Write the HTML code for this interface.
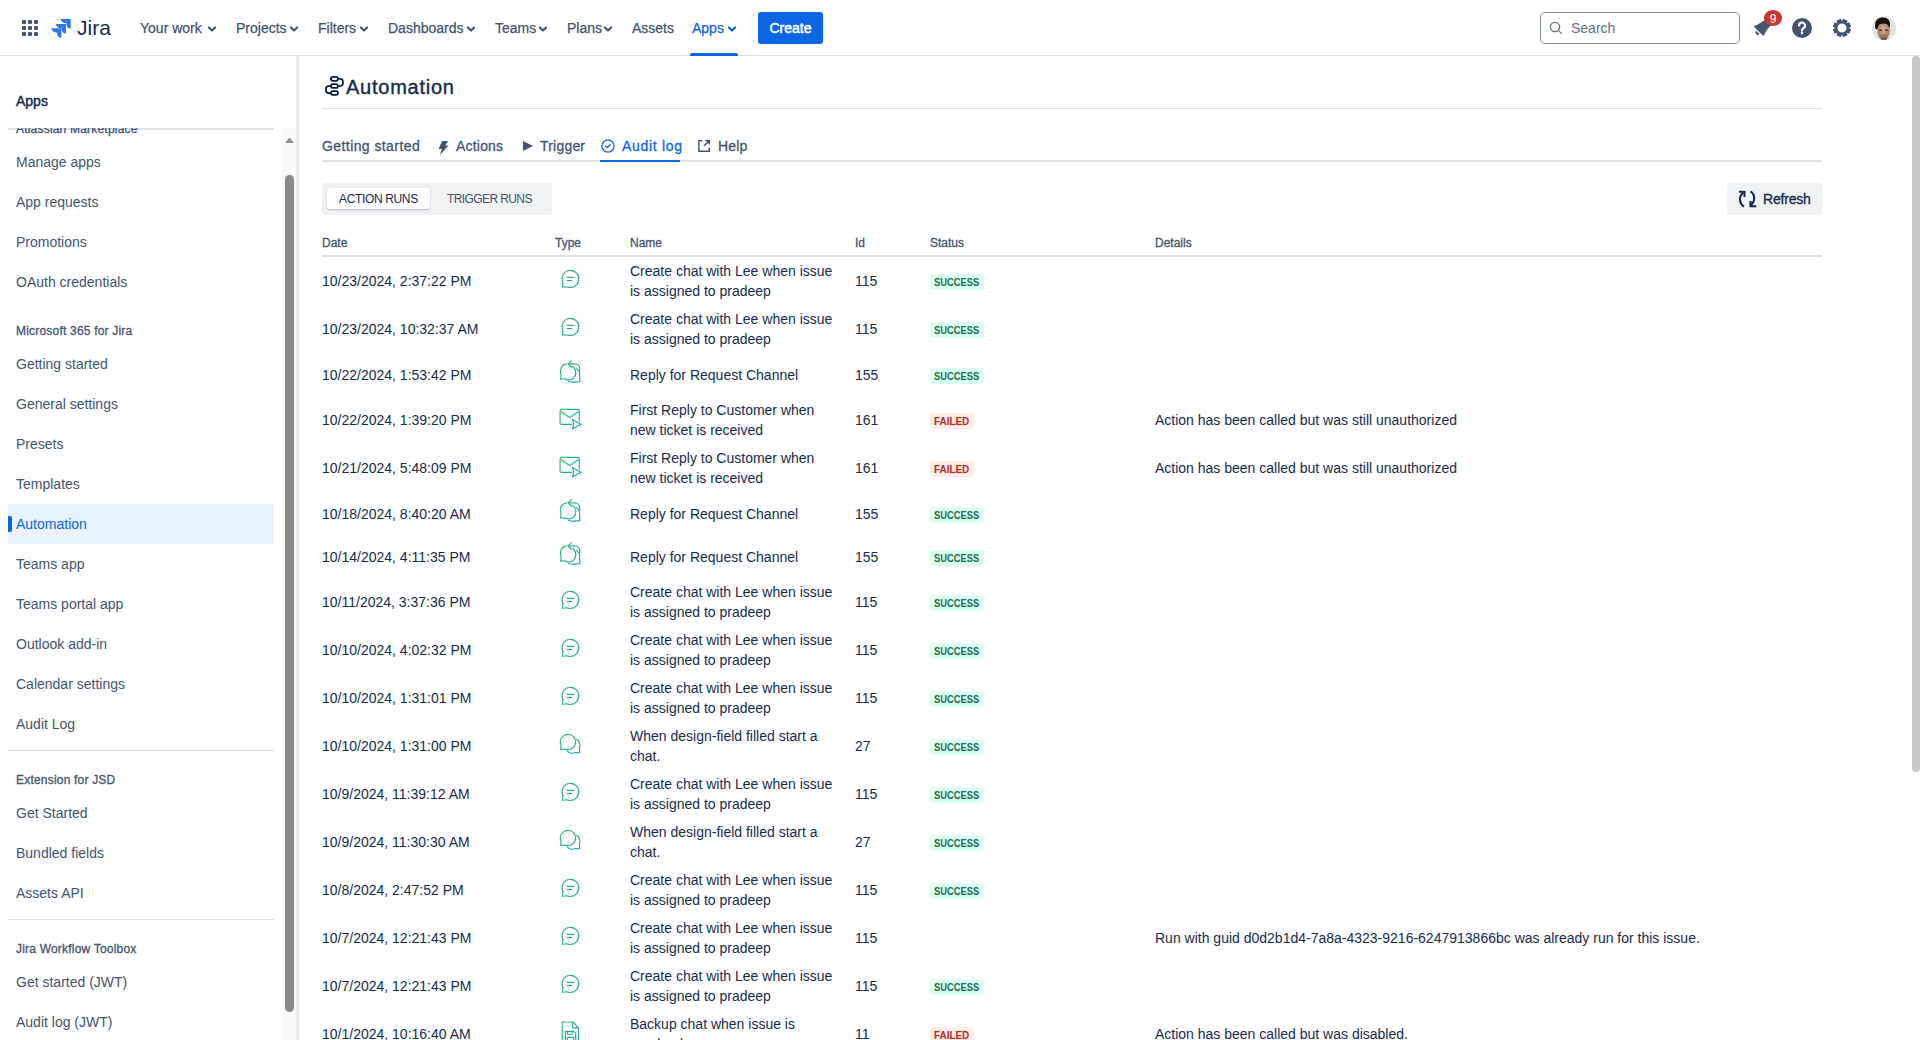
<!DOCTYPE html>
<html><head><meta charset="utf-8"><style>
*{box-sizing:border-box;margin:0;padding:0}
html,body{width:1920px;height:1040px;overflow:hidden;background:#fff;font-family:"Liberation Sans",sans-serif;color:#172B4D}
.abs{position:absolute}
#hdr{position:absolute;left:0;top:0;width:1920px;height:56px;background:#fff;border-bottom:1px solid #DFE1E6}
.nav{position:absolute;top:18px;line-height:20px;font-size:14px;color:#44546F;white-space:nowrap;-webkit-text-stroke:0.25px currentColor}
.chev{position:absolute;top:23.6px}
#side{position:absolute;left:0;top:56px;width:296px;height:984px;background:#fff}
#divider{position:absolute;left:296px;top:56px;width:3px;height:984px;background:#EBECF0}
#sscroll{position:absolute;left:0;top:128px;width:282px;height:912px;overflow:hidden}
.si{position:absolute;left:16px;line-height:20px;font-size:14px;color:#44546F;white-space:nowrap}
.si.sel{color:#0C66E4}
.sh{position:absolute;left:16px;line-height:16px;font-size:12px;color:#44546F;white-space:nowrap;-webkit-text-stroke:0.3px #44546F;letter-spacing:0.2px}
.selbg{position:absolute;left:8px;width:266px;height:40px;background:#E9F2FF;border-radius:3px}
.selbar{position:absolute;left:8px;width:4px;height:16px;background:#0C66E4;border-radius:0 2px 2px 0}
.sep{position:absolute;left:8px;width:266px;height:1px;background:#DFE1E6}
.t{position:absolute;line-height:20px;font-size:14px;color:#172B4D;white-space:nowrap}
.loz{position:absolute;height:16px;line-height:16px;padding:0 0 0 4px;font-size:11px;font-weight:700;border-radius:3px;white-space:nowrap}.loz span{display:inline-block;transform-origin:0 50%}
.loz.ok{background:#DCFFF1;color:#216E4E}
.loz.bad{background:#FFECEB;color:#AE2E24}
.ic{position:absolute}
.th{position:absolute;top:235px;line-height:16px;font-size:12px;color:#44546F;white-space:nowrap;-webkit-text-stroke:0.3px #44546F}
.tab{position:absolute;top:136px;line-height:20px;font-size:14px;color:#44546F;white-space:nowrap;-webkit-text-stroke:0.3px currentColor;letter-spacing:0.2px}
</style></head><body>
<div id="hdr">
 <svg class="abs" style="left:22px;top:20px" width="16" height="16" viewBox="0 0 16 16" fill="#44546F">
  <rect x="0" y="0" width="4" height="4" rx="1"/><rect x="6" y="0" width="4" height="4" rx="1"/><rect x="12" y="0" width="4" height="4" rx="1"/>
  <rect x="0" y="6" width="4" height="4" rx="1"/><rect x="6" y="6" width="4" height="4" rx="1"/><rect x="12" y="6" width="4" height="4" rx="1"/>
  <rect x="0" y="12" width="4" height="4" rx="1"/><rect x="6" y="12" width="4" height="4" rx="1"/><rect x="12" y="12" width="4" height="4" rx="1"/>
 </svg>
 <svg class="abs" style="left:50px;top:17px" width="24" height="24" viewBox="50 17 24 24" fill="#2A78E4"><path d="M60.80 19 H70.7 V28.60 C68.10 28.40 66.30 26.60 66.30 23.20 C62.90 23.20 61.00 21.60 60.80 19Z"/><path d="M56.00 24 H65.9 V33.60 C63.30 33.40 61.50 31.60 61.50 28.20 C58.10 28.20 56.20 26.60 56.00 24Z"/><path d="M51.50 28.2 H61.4 V37.80 C58.80 37.60 57.00 35.80 57.00 32.40 C53.60 32.40 51.70 30.80 51.50 28.2Z"/></svg>
 <div class="abs" style="left:77px;top:15px;line-height:26px;font-size:21px;color:#172B4D">Jira</div>
 <div class="nav" style="left:140px">Your work</div><svg class="chev" style="left:207px" width="10" height="10" viewBox="0 0 10 10"><path d="M1.9 3.5 5 6.5 8.1 3.5" fill="none" stroke="#44546F" stroke-width="2.2" stroke-linecap="round" stroke-linejoin="round"/></svg>
 <div class="nav" style="left:236px">Projects</div><svg class="chev" style="left:289px" width="10" height="10" viewBox="0 0 10 10"><path d="M1.9 3.5 5 6.5 8.1 3.5" fill="none" stroke="#44546F" stroke-width="2.2" stroke-linecap="round" stroke-linejoin="round"/></svg>
 <div class="nav" style="left:318px">Filters</div><svg class="chev" style="left:359px" width="10" height="10" viewBox="0 0 10 10"><path d="M1.9 3.5 5 6.5 8.1 3.5" fill="none" stroke="#44546F" stroke-width="2.2" stroke-linecap="round" stroke-linejoin="round"/></svg>
 <div class="nav" style="left:388px">Dashboards</div><svg class="chev" style="left:466px" width="10" height="10" viewBox="0 0 10 10"><path d="M1.9 3.5 5 6.5 8.1 3.5" fill="none" stroke="#44546F" stroke-width="2.2" stroke-linecap="round" stroke-linejoin="round"/></svg>
 <div class="nav" style="left:495px">Teams</div><svg class="chev" style="left:538px" width="10" height="10" viewBox="0 0 10 10"><path d="M1.9 3.5 5 6.5 8.1 3.5" fill="none" stroke="#44546F" stroke-width="2.2" stroke-linecap="round" stroke-linejoin="round"/></svg>
 <div class="nav" style="left:567px">Plans</div><svg class="chev" style="left:603px" width="10" height="10" viewBox="0 0 10 10"><path d="M1.9 3.5 5 6.5 8.1 3.5" fill="none" stroke="#44546F" stroke-width="2.2" stroke-linecap="round" stroke-linejoin="round"/></svg>
 <div class="nav" style="left:632px">Assets</div>
 <div class="nav" style="left:692px;color:#0C66E4">Apps</div><svg class="chev" style="left:727px" width="10" height="10" viewBox="0 0 10 10"><path d="M1.9 3.5 5 6.5 8.1 3.5" fill="none" stroke="#0C66E4" stroke-width="2.2" stroke-linecap="round" stroke-linejoin="round"/></svg>
 <div class="abs" style="left:690px;top:53px;width:48px;height:3px;background:#0C66E4;border-radius:2px 2px 0 0"></div>
 <div class="abs" style="left:758px;top:12px;width:65px;height:32px;background:#0C66E4;border-radius:3px;color:#fff;font-size:14px;-webkit-text-stroke:0.5px #fff;line-height:32px;text-align:center">Create</div>
 <div class="abs" style="left:1540px;top:12px;width:200px;height:32px;border:1px solid #8590A2;border-radius:5px"></div>
 <svg class="abs" style="left:1549px;top:21px" width="14" height="14" viewBox="0 0 14 14"><circle cx="6" cy="6" r="4.6" fill="none" stroke="#626F86" stroke-width="1.3"/><path d="M9.4 9.4l3 3" stroke="#626F86" stroke-width="1.3" stroke-linecap="round"/></svg>
 <div class="abs" style="left:1571px;top:18px;line-height:20px;font-size:14px;color:#626F86">Search</div>
 <svg class="abs" style="left:1750px;top:6px" width="40" height="36" viewBox="1750 6 40 36"><path d="M1754 26.4 L1763.4 35.8 C1765 31.8 1767.3 28.6 1771 25.2 L1765.6 19.6 C1762.4 22.4 1758.4 24.8 1754 26.4Z" fill="#44546F" stroke="#44546F" stroke-width="0.6" stroke-linejoin="round"/><path d="M1756.2 30.8 L1759.6 34.2 C1758.6 35.2 1757 35.1 1756.1 34.2 C1755.2 33.3 1755.2 31.8 1756.2 30.8Z" fill="#44546F"/><ellipse cx="1773" cy="18" rx="9" ry="8.1" fill="#C9372C"/><text x="1773" y="23" text-anchor="middle" style="font-family:'Liberation Sans';font-size:12px" fill="#fff">9</text></svg>
 <svg class="abs" style="left:1791px;top:17px" width="22" height="22" viewBox="0 0 22 22"><circle cx="11" cy="11" r="10" fill="#44546F"/><path d="M8 8.6a3 3 0 1 1 4.4 2.6c-.9.5-1.4 1-1.4 1.9v.6" fill="none" stroke="#fff" stroke-width="2.1" stroke-linecap="round"/><rect x="9.9" y="15" width="2.2" height="2.2" fill="#fff"/></svg>
 <svg class="abs" style="left:1830px;top:15.7px" width="24" height="24" viewBox="0 0 24 24"><path fill="#44546F" stroke="#44546F" stroke-width="1.1" stroke-linejoin="round" fill-rule="evenodd" d="M12.57 5.52 L13.49 3.53 L16.93 4.96 L16.18 7.02 L16.98 7.82 L19.04 7.07 L20.47 10.51 L18.48 11.43 L18.48 12.57 L20.47 13.49 L19.04 16.93 L16.98 16.18 L16.18 16.98 L16.93 19.04 L13.49 20.47 L12.57 18.48 L11.43 18.48 L10.51 20.47 L7.07 19.04 L7.82 16.98 L7.02 16.18 L4.96 16.93 L3.53 13.49 L5.52 12.57 L5.52 11.43 L3.53 10.51 L4.96 7.07 L7.02 7.82 L7.82 7.02 L7.07 4.96 L10.51 3.53 L11.43 5.52Z M17.10 12 A5.1 5.1 0 1 0 6.90 12 A5.1 5.1 0 1 0 17.10 12Z"/></svg>
 <svg class="abs" style="left:1872px;top:16px" width="24" height="24" viewBox="0 0 24 24"><defs><clipPath id="avc"><circle cx="12" cy="12" r="12"/></clipPath><radialGradient id="skin" cx="50%" cy="40%" r="65%"><stop offset="0" stop-color="#DDB39A"/><stop offset="1" stop-color="#9A6450"/></radialGradient></defs><g clip-path="url(#avc)"><rect width="24" height="24" fill="#E4E3DE"/><path d="M2 27 C3 21 7 20.5 11.5 20.5 C16 20.5 20 21 21 27Z" fill="#B5DCE6"/><ellipse cx="11.6" cy="14.8" rx="6.2" ry="8.6" fill="url(#skin)"/><rect x="8.8" y="21.5" width="6" height="4" fill="#7E4E3C"/><path d="M3.4 12.6 C2.2 6.2 4.6 1.8 10.2 1.6 C15.6 1.4 18.6 4.4 18 9.4 L17.3 12.2 C16.6 9 14.6 7.3 11 7.6 C7.8 7.9 6.2 8.8 5.3 13.8Z" fill="#16120F"/><path d="M7.2 14.2h3M12.8 14.2h3" stroke="#3a2620" stroke-width="1.3"/><path d="M9.5 19.6h4.5" stroke="#8a5a48" stroke-width="0.9"/></g></svg>
</div>

<div id="side">
 <div class="abs" style="left:16px;top:35px;line-height:20px;font-size:14px;color:#172B4D;-webkit-text-stroke:0.45px #172B4D">Apps</div>
</div>
<div class="abs" style="left:8px;top:128px;width:266px;height:2px;background:#DFE1E6"></div>
<div id="sscroll"><div class="sh" style="top:-7.16px">Atlassian Marketplace</div><div class="si" style="top:24px">Manage apps</div><div class="si" style="top:64px">App requests</div><div class="si" style="top:104px">Promotions</div><div class="si" style="top:144px">OAuth credentials</div><div class="sh" style="top:195.24px">Microsoft 365 for Jira</div><div class="si" style="top:226px">Getting started</div><div class="si" style="top:266px">General settings</div><div class="si" style="top:306px">Presets</div><div class="si" style="top:346px">Templates</div><div class="selbg" style="top:376px"></div><div class="selbar" style="top:388px"></div><div class="si sel" style="top:386px">Automation</div><div class="si" style="top:426px">Teams app</div><div class="si" style="top:466px">Teams portal app</div><div class="si" style="top:506px">Outlook add-in</div><div class="si" style="top:546px">Calendar settings</div><div class="si" style="top:586px">Audit Log</div><div class="sep" style="top:622px"></div><div class="sh" style="top:643.64px">Extension for JSD</div><div class="si" style="top:675px">Get Started</div><div class="si" style="top:715px">Bundled fields</div><div class="si" style="top:755px">Assets API</div><div class="sep" style="top:791px"></div><div class="sh" style="top:812.64px">Jira Workflow Toolbox</div><div class="si" style="top:844px">Get started (JWT)</div><div class="si" style="top:884px">Audit log (JWT)</div></div>
<div class="abs" style="left:282px;top:128px;width:14px;height:912px;background:#FAFAFA"></div>
<svg class="abs" style="left:284px;top:137px" width="11" height="7" viewBox="0 0 11 7"><path d="M5.5 0.5 10 6H1z" fill="#8F8F8F"/></svg>
<div class="abs" style="left:285px;top:175px;width:9px;height:837px;background:#8B8B8B;border-radius:5px"></div>
<div id="divider"></div>

<div class="abs" style="left:1912px;top:56px;width:8px;height:716px;background:#C8C8C8;border-radius:4px"></div>

<!-- page title -->
<svg class="abs" style="left:320px;top:72px" width="30" height="28" viewBox="320 72 30 28"><g fill="none" stroke="#091E42" stroke-width="1.75"><rect x="330.95" y="76.85" width="7.05" height="4" rx="2"/><rect x="330.95" y="84.05" width="7.05" height="3.9" rx="1.95"/><rect x="330.95" y="91.15" width="7.05" height="3.8" rx="1.9"/><path d="M338.9 78.85H340.3C342 78.85 342.95 80 342.95 81.7V83.1C342.95 84.9 342 86 340.3 86H338.9"/><path d="M330.9 86H328.7C327 86 325.95 87.1 325.95 88.8V90.2C325.95 91.9 327 93.05 328.7 93.05H330.9"/></g></svg>
<div class="abs" style="left:346px;top:73px;line-height:28px;font-size:20px;color:#172B4D;letter-spacing:0.75px;-webkit-text-stroke:0.4px #172B4D">Automation</div>
<div class="abs" style="left:322px;top:108px;width:1500px;height:1px;background:#DFE1E6"></div>

<!-- tabs -->
<div class="tab" style="left:322px;letter-spacing:0.42px">Getting started</div>
<svg class="abs" style="left:438px;top:141px" width="11" height="14" viewBox="0 0 11 14"><path d="M4.2 0h6L7.3 4.6h3.2L2 14l1.9-6.1H.6z" fill="#44546F"/></svg>
<div class="tab" style="left:456px">Actions</div>
<svg class="abs" style="left:523px;top:141px" width="10" height="10" viewBox="0 0 10 10"><path d="M0 0l10 5-10 5z" fill="#44546F"/></svg>
<div class="tab" style="left:540px">Trigger</div>
<svg class="abs" style="left:600px;top:138px" width="16" height="16" viewBox="0 0 16 16"><circle cx="8" cy="8" r="6.1" fill="none" stroke="#0C66E4" stroke-width="1.3"/><path d="M5.6 8.2 7.3 9.6l2.9-2.9" fill="none" stroke="#0C66E4" stroke-width="1.35" stroke-linecap="round" stroke-linejoin="round"/></svg>
<div class="tab" style="left:622px;color:#0C66E4;letter-spacing:0.7px">Audit log</div>
<svg class="abs" style="left:697px;top:139px" width="14" height="14" viewBox="0 0 14 14"><path d="M5.3 1.8H1.9V12.2H12.3V8.7M8.4 1.7H12.3V5.6M12.1 1.9 6.9 7.1" fill="none" stroke="#44546F" stroke-width="1.45"/></svg>
<div class="tab" style="left:718px">Help</div>
<div class="abs" style="left:322px;top:160px;width:1500px;height:2px;background:#DFE1E6"></div>
<div class="abs" style="left:600px;top:160px;width:80px;height:2px;background:#0C66E4"></div>

<!-- segmented -->
<div class="abs" style="left:322px;top:183px;width:230px;height:32px;background:#F1F2F4;border-radius:3px"></div>
<div class="abs" style="left:327px;top:188px;width:103px;height:21px;background:#fff;border-radius:3px;box-shadow:0 1px 2px rgba(9,30,66,.25)"></div>
<div class="abs" style="left:339px;top:191px;line-height:16px;font-size:12px;color:#172B4D;letter-spacing:-0.35px">ACTION RUNS</div>
<div class="abs" style="left:447px;top:191px;line-height:16px;font-size:12px;color:#44546F;letter-spacing:-0.6px">TRIGGER RUNS</div>

<!-- refresh -->
<div class="abs" style="left:1727px;top:183px;width:95px;height:32px;background:#F1F2F4;border-radius:3px"></div>
<svg class="abs" style="left:1736px;top:188px" width="22" height="22" viewBox="0 0 22 22"><g fill="none" stroke="#172B4D" stroke-width="2.1" stroke-linejoin="miter" stroke-linecap="butt"><path d="M7.4 4.6C3 7.6 2.4 14.4 8 18.6"/><path d="M2.9 3.7H8.5V9"/><path d="M14.4 3.4C19.2 6.4 19.8 13.4 14.2 17.6"/><path d="M20.2 18.3H14.5V13"/></g></svg><div class="abs" style="left:1763px;top:189px;line-height:20px;font-size:14px;color:#172B4D;-webkit-text-stroke:0.35px #172B4D;letter-spacing:-0.2px">Refresh</div>

<!-- table header -->
<div class="th" style="left:322px">Date</div>
<div class="th" style="left:555px">Type</div>
<div class="th" style="left:630px">Name</div>
<div class="th" style="left:855px">Id</div>
<div class="th" style="left:930px">Status</div>
<div class="th" style="left:1155px">Details</div>
<div class="abs" style="left:322px;top:255px;width:1500px;height:2px;background:#DFE1E6"></div>
<div class="t" style="left:322px;top:271.0px">10/23/2024, 2:37:22 PM</div><svg class="ic" style="left:558px;top:266.0px" width="26" height="30" viewBox="0 0 26 30"><defs><linearGradient id="g0" gradientUnits="userSpaceOnUse" x1="2" y1="2" x2="22" y2="22"><stop offset="0" stop-color="#3BB97F"/><stop offset="1" stop-color="#18A5AE"/></linearGradient></defs><path d="M12.3 4.3a8.55 8.55 0 1 1 -3.4 16.4 L4.4 21.2 5 16.6 A8.55 8.55 0 0 1 12.3 4.3z" fill="none" stroke="url(#g0)" stroke-width="1.15" stroke-linecap="round" stroke-linejoin="round"/><path d="M9.1 11.4h6.8M9.1 14.5h4.6" fill="none" stroke="url(#g0)" stroke-width="1.15" stroke-linecap="round" stroke-linejoin="round" stroke-width="1.3"/></svg><div class="t" style="left:630px;top:261.0px">Create chat with Lee when issue<br>is assigned to pradeep</div><div class="t" style="left:855px;top:271.0px">115</div><div class="loz ok" style="left:930px;top:274.0px;width:54px"><span style="transform:scaleX(0.85)">SUCCESS</span></div><div class="t" style="left:322px;top:319.0px">10/23/2024, 10:32:37 AM</div><svg class="ic" style="left:558px;top:314.0px" width="26" height="30" viewBox="0 0 26 30"><defs><linearGradient id="g1" gradientUnits="userSpaceOnUse" x1="2" y1="2" x2="22" y2="22"><stop offset="0" stop-color="#3BB97F"/><stop offset="1" stop-color="#18A5AE"/></linearGradient></defs><path d="M12.3 4.3a8.55 8.55 0 1 1 -3.4 16.4 L4.4 21.2 5 16.6 A8.55 8.55 0 0 1 12.3 4.3z" fill="none" stroke="url(#g1)" stroke-width="1.15" stroke-linecap="round" stroke-linejoin="round"/><path d="M9.1 11.4h6.8M9.1 14.5h4.6" fill="none" stroke="url(#g1)" stroke-width="1.15" stroke-linecap="round" stroke-linejoin="round" stroke-width="1.3"/></svg><div class="t" style="left:630px;top:309.0px">Create chat with Lee when issue<br>is assigned to pradeep</div><div class="t" style="left:855px;top:319.0px">115</div><div class="loz ok" style="left:930px;top:322.0px;width:54px"><span style="transform:scaleX(0.85)">SUCCESS</span></div><div class="t" style="left:322px;top:364.5px">10/22/2024, 1:53:42 PM</div><svg class="ic" style="left:558px;top:359.5px" width="26" height="30" viewBox="0 0 26 30"><defs><linearGradient id="g2" gradientUnits="userSpaceOnUse" x1="2" y1="2" x2="22" y2="22"><stop offset="0" stop-color="#3BB97F"/><stop offset="1" stop-color="#18A5AE"/></linearGradient></defs><path d="M8.4 3.9C4.8 4.7 2.3 7.8 2.4 11.6c0 1.4.3 2.5.8 3.5L2.6 19.1l3.9-.3c1.3.8 2.9 1.2 4.5 1.2 3.9 0 6.8-3.1 6.8-7.2 0-2.8-1.2-5-2.9-6.3" fill="none" stroke="url(#g2)" stroke-width="1.15" stroke-linecap="round" stroke-linejoin="round"/><path d="M13.5 0.6 10 3.9l3.5 3.6M10.2 3.9h6.3c3.2 0 5.3 2.2 5.3 5 0 1.4-.3 2.3-.3 3.1l.4 9.8-4 .1c-1.5.5-5.2.4-7.4-.6M18.6 8.7l2.6 2.8" fill="none" stroke="url(#g2)" stroke-width="1.15" stroke-linecap="round" stroke-linejoin="round"/></svg><div class="t" style="left:630px;top:364.5px">Reply for Request Channel</div><div class="t" style="left:855px;top:364.5px">155</div><div class="loz ok" style="left:930px;top:367.5px;width:54px"><span style="transform:scaleX(0.85)">SUCCESS</span></div><div class="t" style="left:322px;top:410.0px">10/22/2024, 1:39:20 PM</div><svg class="ic" style="left:558px;top:405.0px" width="26" height="30" viewBox="0 0 26 30"><defs><linearGradient id="g3" gradientUnits="userSpaceOnUse" x1="2" y1="2" x2="22" y2="22"><stop offset="0" stop-color="#3BB97F"/><stop offset="1" stop-color="#18A5AE"/></linearGradient></defs><path d="M13.6 19.4H3.6a1.5 1.5 0 0 1-1.5-1.5V5.9a1.5 1.5 0 0 1 1.5-1.5h16.1a1.5 1.5 0 0 1 1.5 1.5v10.2" fill="none" stroke="url(#g3)" stroke-width="1.15" stroke-linecap="round" stroke-linejoin="round"/><path d="M2.6 6.6 11.6 12.4 20.8 6.6" fill="none" stroke="url(#g3)" stroke-width="1.15" stroke-linecap="round" stroke-linejoin="round"/><path d="M14.6 14.6 23 19.3l-8.4 4.4 1.3-4.4z" fill="none" stroke="url(#g3)" stroke-width="1.15" stroke-linecap="round" stroke-linejoin="round"/></svg><div class="t" style="left:630px;top:400.0px">First Reply to Customer when<br>new ticket is received</div><div class="t" style="left:855px;top:410.0px">161</div><div class="loz bad" style="left:930px;top:413.0px;width:44px"><span style="transform:scaleX(0.9)">FAILED</span></div><div class="t" style="left:1155px;top:410.0px">Action has been called but was still unauthorized</div><div class="t" style="left:322px;top:458.0px">10/21/2024, 5:48:09 PM</div><svg class="ic" style="left:558px;top:453.0px" width="26" height="30" viewBox="0 0 26 30"><defs><linearGradient id="g4" gradientUnits="userSpaceOnUse" x1="2" y1="2" x2="22" y2="22"><stop offset="0" stop-color="#3BB97F"/><stop offset="1" stop-color="#18A5AE"/></linearGradient></defs><path d="M13.6 19.4H3.6a1.5 1.5 0 0 1-1.5-1.5V5.9a1.5 1.5 0 0 1 1.5-1.5h16.1a1.5 1.5 0 0 1 1.5 1.5v10.2" fill="none" stroke="url(#g4)" stroke-width="1.15" stroke-linecap="round" stroke-linejoin="round"/><path d="M2.6 6.6 11.6 12.4 20.8 6.6" fill="none" stroke="url(#g4)" stroke-width="1.15" stroke-linecap="round" stroke-linejoin="round"/><path d="M14.6 14.6 23 19.3l-8.4 4.4 1.3-4.4z" fill="none" stroke="url(#g4)" stroke-width="1.15" stroke-linecap="round" stroke-linejoin="round"/></svg><div class="t" style="left:630px;top:448.0px">First Reply to Customer when<br>new ticket is received</div><div class="t" style="left:855px;top:458.0px">161</div><div class="loz bad" style="left:930px;top:461.0px;width:44px"><span style="transform:scaleX(0.9)">FAILED</span></div><div class="t" style="left:1155px;top:458.0px">Action has been called but was still unauthorized</div><div class="t" style="left:322px;top:503.5px">10/18/2024, 8:40:20 AM</div><svg class="ic" style="left:558px;top:498.5px" width="26" height="30" viewBox="0 0 26 30"><defs><linearGradient id="g5" gradientUnits="userSpaceOnUse" x1="2" y1="2" x2="22" y2="22"><stop offset="0" stop-color="#3BB97F"/><stop offset="1" stop-color="#18A5AE"/></linearGradient></defs><path d="M8.4 3.9C4.8 4.7 2.3 7.8 2.4 11.6c0 1.4.3 2.5.8 3.5L2.6 19.1l3.9-.3c1.3.8 2.9 1.2 4.5 1.2 3.9 0 6.8-3.1 6.8-7.2 0-2.8-1.2-5-2.9-6.3" fill="none" stroke="url(#g5)" stroke-width="1.15" stroke-linecap="round" stroke-linejoin="round"/><path d="M13.5 0.6 10 3.9l3.5 3.6M10.2 3.9h6.3c3.2 0 5.3 2.2 5.3 5 0 1.4-.3 2.3-.3 3.1l.4 9.8-4 .1c-1.5.5-5.2.4-7.4-.6M18.6 8.7l2.6 2.8" fill="none" stroke="url(#g5)" stroke-width="1.15" stroke-linecap="round" stroke-linejoin="round"/></svg><div class="t" style="left:630px;top:503.5px">Reply for Request Channel</div><div class="t" style="left:855px;top:503.5px">155</div><div class="loz ok" style="left:930px;top:506.5px;width:54px"><span style="transform:scaleX(0.85)">SUCCESS</span></div><div class="t" style="left:322px;top:546.5px">10/14/2024, 4:11:35 PM</div><svg class="ic" style="left:558px;top:541.5px" width="26" height="30" viewBox="0 0 26 30"><defs><linearGradient id="g6" gradientUnits="userSpaceOnUse" x1="2" y1="2" x2="22" y2="22"><stop offset="0" stop-color="#3BB97F"/><stop offset="1" stop-color="#18A5AE"/></linearGradient></defs><path d="M8.4 3.9C4.8 4.7 2.3 7.8 2.4 11.6c0 1.4.3 2.5.8 3.5L2.6 19.1l3.9-.3c1.3.8 2.9 1.2 4.5 1.2 3.9 0 6.8-3.1 6.8-7.2 0-2.8-1.2-5-2.9-6.3" fill="none" stroke="url(#g6)" stroke-width="1.15" stroke-linecap="round" stroke-linejoin="round"/><path d="M13.5 0.6 10 3.9l3.5 3.6M10.2 3.9h6.3c3.2 0 5.3 2.2 5.3 5 0 1.4-.3 2.3-.3 3.1l.4 9.8-4 .1c-1.5.5-5.2.4-7.4-.6M18.6 8.7l2.6 2.8" fill="none" stroke="url(#g6)" stroke-width="1.15" stroke-linecap="round" stroke-linejoin="round"/></svg><div class="t" style="left:630px;top:546.5px">Reply for Request Channel</div><div class="t" style="left:855px;top:546.5px">155</div><div class="loz ok" style="left:930px;top:549.5px;width:54px"><span style="transform:scaleX(0.85)">SUCCESS</span></div><div class="t" style="left:322px;top:592.0px">10/11/2024, 3:37:36 PM</div><svg class="ic" style="left:558px;top:587.0px" width="26" height="30" viewBox="0 0 26 30"><defs><linearGradient id="g7" gradientUnits="userSpaceOnUse" x1="2" y1="2" x2="22" y2="22"><stop offset="0" stop-color="#3BB97F"/><stop offset="1" stop-color="#18A5AE"/></linearGradient></defs><path d="M12.3 4.3a8.55 8.55 0 1 1 -3.4 16.4 L4.4 21.2 5 16.6 A8.55 8.55 0 0 1 12.3 4.3z" fill="none" stroke="url(#g7)" stroke-width="1.15" stroke-linecap="round" stroke-linejoin="round"/><path d="M9.1 11.4h6.8M9.1 14.5h4.6" fill="none" stroke="url(#g7)" stroke-width="1.15" stroke-linecap="round" stroke-linejoin="round" stroke-width="1.3"/></svg><div class="t" style="left:630px;top:582.0px">Create chat with Lee when issue<br>is assigned to pradeep</div><div class="t" style="left:855px;top:592.0px">115</div><div class="loz ok" style="left:930px;top:595.0px;width:54px"><span style="transform:scaleX(0.85)">SUCCESS</span></div><div class="t" style="left:322px;top:640.0px">10/10/2024, 4:02:32 PM</div><svg class="ic" style="left:558px;top:635.0px" width="26" height="30" viewBox="0 0 26 30"><defs><linearGradient id="g8" gradientUnits="userSpaceOnUse" x1="2" y1="2" x2="22" y2="22"><stop offset="0" stop-color="#3BB97F"/><stop offset="1" stop-color="#18A5AE"/></linearGradient></defs><path d="M12.3 4.3a8.55 8.55 0 1 1 -3.4 16.4 L4.4 21.2 5 16.6 A8.55 8.55 0 0 1 12.3 4.3z" fill="none" stroke="url(#g8)" stroke-width="1.15" stroke-linecap="round" stroke-linejoin="round"/><path d="M9.1 11.4h6.8M9.1 14.5h4.6" fill="none" stroke="url(#g8)" stroke-width="1.15" stroke-linecap="round" stroke-linejoin="round" stroke-width="1.3"/></svg><div class="t" style="left:630px;top:630.0px">Create chat with Lee when issue<br>is assigned to pradeep</div><div class="t" style="left:855px;top:640.0px">115</div><div class="loz ok" style="left:930px;top:643.0px;width:54px"><span style="transform:scaleX(0.85)">SUCCESS</span></div><div class="t" style="left:322px;top:688.0px">10/10/2024, 1:31:01 PM</div><svg class="ic" style="left:558px;top:683.0px" width="26" height="30" viewBox="0 0 26 30"><defs><linearGradient id="g9" gradientUnits="userSpaceOnUse" x1="2" y1="2" x2="22" y2="22"><stop offset="0" stop-color="#3BB97F"/><stop offset="1" stop-color="#18A5AE"/></linearGradient></defs><path d="M12.3 4.3a8.55 8.55 0 1 1 -3.4 16.4 L4.4 21.2 5 16.6 A8.55 8.55 0 0 1 12.3 4.3z" fill="none" stroke="url(#g9)" stroke-width="1.15" stroke-linecap="round" stroke-linejoin="round"/><path d="M9.1 11.4h6.8M9.1 14.5h4.6" fill="none" stroke="url(#g9)" stroke-width="1.15" stroke-linecap="round" stroke-linejoin="round" stroke-width="1.3"/></svg><div class="t" style="left:630px;top:678.0px">Create chat with Lee when issue<br>is assigned to pradeep</div><div class="t" style="left:855px;top:688.0px">115</div><div class="loz ok" style="left:930px;top:691.0px;width:54px"><span style="transform:scaleX(0.85)">SUCCESS</span></div><div class="t" style="left:322px;top:736.0px">10/10/2024, 1:31:00 PM</div><svg class="ic" style="left:558px;top:731.0px" width="26" height="30" viewBox="0 0 26 30"><defs><linearGradient id="g10" gradientUnits="userSpaceOnUse" x1="2" y1="2" x2="22" y2="22"><stop offset="0" stop-color="#3BB97F"/><stop offset="1" stop-color="#18A5AE"/></linearGradient></defs><path d="M10 3.3a7.65 7.65 0 1 1 -2.9 14.7 L2.7 18.4 3.2 14.4 A7.65 7.65 0 0 1 10 3.3z" fill="none" stroke="url(#g10)" stroke-width="1.15" stroke-linecap="round" stroke-linejoin="round"/><path d="M18.4 8.3c2.1 1.3 3.5 3.4 3.5 6.1 0 1.1-.2 2-.6 2.9l.4 4.4-4.3-.2c-2.5 1.1-5.9.9-8.4-1.6" fill="none" stroke="url(#g10)" stroke-width="1.15" stroke-linecap="round" stroke-linejoin="round"/></svg><div class="t" style="left:630px;top:726.0px">When design-field filled start a<br>chat.</div><div class="t" style="left:855px;top:736.0px">27</div><div class="loz ok" style="left:930px;top:739.0px;width:54px"><span style="transform:scaleX(0.85)">SUCCESS</span></div><div class="t" style="left:322px;top:784.0px">10/9/2024, 11:39:12 AM</div><svg class="ic" style="left:558px;top:779.0px" width="26" height="30" viewBox="0 0 26 30"><defs><linearGradient id="g11" gradientUnits="userSpaceOnUse" x1="2" y1="2" x2="22" y2="22"><stop offset="0" stop-color="#3BB97F"/><stop offset="1" stop-color="#18A5AE"/></linearGradient></defs><path d="M12.3 4.3a8.55 8.55 0 1 1 -3.4 16.4 L4.4 21.2 5 16.6 A8.55 8.55 0 0 1 12.3 4.3z" fill="none" stroke="url(#g11)" stroke-width="1.15" stroke-linecap="round" stroke-linejoin="round"/><path d="M9.1 11.4h6.8M9.1 14.5h4.6" fill="none" stroke="url(#g11)" stroke-width="1.15" stroke-linecap="round" stroke-linejoin="round" stroke-width="1.3"/></svg><div class="t" style="left:630px;top:774.0px">Create chat with Lee when issue<br>is assigned to pradeep</div><div class="t" style="left:855px;top:784.0px">115</div><div class="loz ok" style="left:930px;top:787.0px;width:54px"><span style="transform:scaleX(0.85)">SUCCESS</span></div><div class="t" style="left:322px;top:832.0px">10/9/2024, 11:30:30 AM</div><svg class="ic" style="left:558px;top:827.0px" width="26" height="30" viewBox="0 0 26 30"><defs><linearGradient id="g12" gradientUnits="userSpaceOnUse" x1="2" y1="2" x2="22" y2="22"><stop offset="0" stop-color="#3BB97F"/><stop offset="1" stop-color="#18A5AE"/></linearGradient></defs><path d="M10 3.3a7.65 7.65 0 1 1 -2.9 14.7 L2.7 18.4 3.2 14.4 A7.65 7.65 0 0 1 10 3.3z" fill="none" stroke="url(#g12)" stroke-width="1.15" stroke-linecap="round" stroke-linejoin="round"/><path d="M18.4 8.3c2.1 1.3 3.5 3.4 3.5 6.1 0 1.1-.2 2-.6 2.9l.4 4.4-4.3-.2c-2.5 1.1-5.9.9-8.4-1.6" fill="none" stroke="url(#g12)" stroke-width="1.15" stroke-linecap="round" stroke-linejoin="round"/></svg><div class="t" style="left:630px;top:822.0px">When design-field filled start a<br>chat.</div><div class="t" style="left:855px;top:832.0px">27</div><div class="loz ok" style="left:930px;top:835.0px;width:54px"><span style="transform:scaleX(0.85)">SUCCESS</span></div><div class="t" style="left:322px;top:880.0px">10/8/2024, 2:47:52 PM</div><svg class="ic" style="left:558px;top:875.0px" width="26" height="30" viewBox="0 0 26 30"><defs><linearGradient id="g13" gradientUnits="userSpaceOnUse" x1="2" y1="2" x2="22" y2="22"><stop offset="0" stop-color="#3BB97F"/><stop offset="1" stop-color="#18A5AE"/></linearGradient></defs><path d="M12.3 4.3a8.55 8.55 0 1 1 -3.4 16.4 L4.4 21.2 5 16.6 A8.55 8.55 0 0 1 12.3 4.3z" fill="none" stroke="url(#g13)" stroke-width="1.15" stroke-linecap="round" stroke-linejoin="round"/><path d="M9.1 11.4h6.8M9.1 14.5h4.6" fill="none" stroke="url(#g13)" stroke-width="1.15" stroke-linecap="round" stroke-linejoin="round" stroke-width="1.3"/></svg><div class="t" style="left:630px;top:870.0px">Create chat with Lee when issue<br>is assigned to pradeep</div><div class="t" style="left:855px;top:880.0px">115</div><div class="loz ok" style="left:930px;top:883.0px;width:54px"><span style="transform:scaleX(0.85)">SUCCESS</span></div><div class="t" style="left:322px;top:928.0px">10/7/2024, 12:21:43 PM</div><svg class="ic" style="left:558px;top:923.0px" width="26" height="30" viewBox="0 0 26 30"><defs><linearGradient id="g14" gradientUnits="userSpaceOnUse" x1="2" y1="2" x2="22" y2="22"><stop offset="0" stop-color="#3BB97F"/><stop offset="1" stop-color="#18A5AE"/></linearGradient></defs><path d="M12.3 4.3a8.55 8.55 0 1 1 -3.4 16.4 L4.4 21.2 5 16.6 A8.55 8.55 0 0 1 12.3 4.3z" fill="none" stroke="url(#g14)" stroke-width="1.15" stroke-linecap="round" stroke-linejoin="round"/><path d="M9.1 11.4h6.8M9.1 14.5h4.6" fill="none" stroke="url(#g14)" stroke-width="1.15" stroke-linecap="round" stroke-linejoin="round" stroke-width="1.3"/></svg><div class="t" style="left:630px;top:918.0px">Create chat with Lee when issue<br>is assigned to pradeep</div><div class="t" style="left:855px;top:928.0px">115</div><div class="t" style="left:1155px;top:928.0px">Run with guid d0d2b1d4-7a8a-4323-9216-6247913866bc was already run for this issue.</div><div class="t" style="left:322px;top:976.0px">10/7/2024, 12:21:43 PM</div><svg class="ic" style="left:558px;top:971.0px" width="26" height="30" viewBox="0 0 26 30"><defs><linearGradient id="g15" gradientUnits="userSpaceOnUse" x1="2" y1="2" x2="22" y2="22"><stop offset="0" stop-color="#3BB97F"/><stop offset="1" stop-color="#18A5AE"/></linearGradient></defs><path d="M12.3 4.3a8.55 8.55 0 1 1 -3.4 16.4 L4.4 21.2 5 16.6 A8.55 8.55 0 0 1 12.3 4.3z" fill="none" stroke="url(#g15)" stroke-width="1.15" stroke-linecap="round" stroke-linejoin="round"/><path d="M9.1 11.4h6.8M9.1 14.5h4.6" fill="none" stroke="url(#g15)" stroke-width="1.15" stroke-linecap="round" stroke-linejoin="round" stroke-width="1.3"/></svg><div class="t" style="left:630px;top:966.0px">Create chat with Lee when issue<br>is assigned to pradeep</div><div class="t" style="left:855px;top:976.0px">115</div><div class="loz ok" style="left:930px;top:979.0px;width:54px"><span style="transform:scaleX(0.85)">SUCCESS</span></div><div class="t" style="left:322px;top:1024.0px">10/1/2024, 10:16:40 AM</div><svg class="ic" style="left:558px;top:1019.0px" width="26" height="30" viewBox="0 0 26 30"><defs><linearGradient id="g16" gradientUnits="userSpaceOnUse" x1="2" y1="2" x2="22" y2="22"><stop offset="0" stop-color="#3BB97F"/><stop offset="1" stop-color="#18A5AE"/></linearGradient></defs><path d="M4.2 29V3h10.8l5.4 5.8V29" fill="none" stroke="url(#g16)" stroke-width="1.15" stroke-linecap="round" stroke-linejoin="round" stroke-width="1.25"/><path d="M14.7 3.2v5.6h5.5" fill="none" stroke="url(#g16)" stroke-width="1.15" stroke-linecap="round" stroke-linejoin="round" stroke-width="1.25"/><path d="M7.5 7.2h4.4" fill="none" stroke="url(#g16)" stroke-width="1.15" stroke-linecap="round" stroke-linejoin="round" stroke-width="0.9" stroke-opacity=".45"/><path d="M7.4 12.3h8.3l2 2v10H7.4z" fill="none" stroke="url(#g16)" stroke-width="1.15" stroke-linecap="round" stroke-linejoin="round" stroke-width="1.25"/><path d="M9.6 12.4v2.8h4.5v-2.8M9.3 24.4v-6h6.4v6" fill="none" stroke="url(#g16)" stroke-width="1.15" stroke-linecap="round" stroke-linejoin="round" stroke-width="1.1"/></svg><div class="t" style="left:630px;top:1014.0px">Backup chat when issue is<br>resolved.</div><div class="t" style="left:855px;top:1024.0px">11</div><div class="loz bad" style="left:930px;top:1027.0px;width:44px"><span style="transform:scaleX(0.9)">FAILED</span></div><div class="t" style="left:1155px;top:1024.0px">Action has been called but was disabled.</div>
</body></html>
